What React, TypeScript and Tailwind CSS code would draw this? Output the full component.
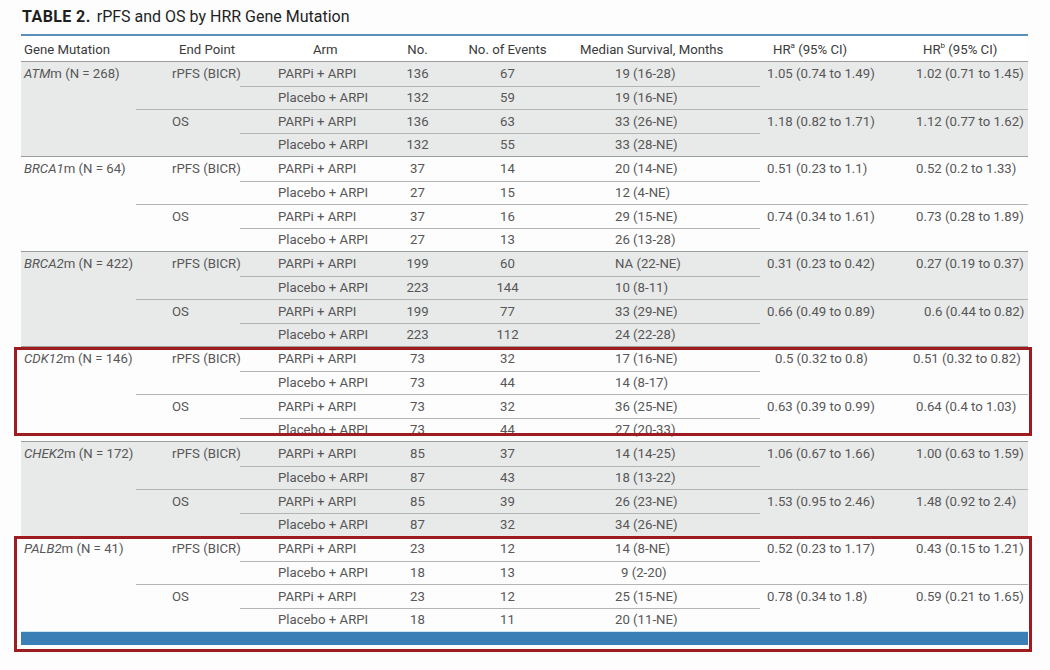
import React from 'react';

type Row = [string, string, string, string];

interface Group {
  gene: string;
  n: number;
  shaded: boolean;
  rows: Row[];
  hr: [string, string][];
  // small nudges where the source table isn't perfectly left aligned
  medPad?: number[];
  hrPad?: [number, number][];
}

const groups: Group[] = [
  {
    gene: 'ATM',
    n: 268,
    shaded: true,
    rows: [
      ['PARPi + ARPI', '136', '67', '19 (16-28)'],
      ['Placebo + ARPI', '132', '59', '19 (16-NE)'],
      ['PARPi + ARPI', '136', '63', '33 (26-NE)'],
      ['Placebo + ARPI', '132', '55', '33 (28-NE)'],
    ],
    hr: [
      ['1.05 (0.74 to 1.49)', '1.02 (0.71 to 1.45)'],
      ['1.18 (0.82 to 1.71)', '1.12 (0.77 to 1.62)'],
    ],
  },
  {
    gene: 'BRCA1',
    n: 64,
    shaded: false,
    rows: [
      ['PARPi + ARPI', '37', '14', '20 (14-NE)'],
      ['Placebo + ARPI', '27', '15', '12 (4-NE)'],
      ['PARPi + ARPI', '37', '16', '29 (15-NE)'],
      ['Placebo + ARPI', '27', '13', '26 (13-28)'],
    ],
    hr: [
      ['0.51 (0.23 to 1.1)', '0.52 (0.2 to 1.33)'],
      ['0.74 (0.34 to 1.61)', '0.73 (0.28 to 1.89)'],
    ],
  },
  {
    gene: 'BRCA2',
    n: 422,
    shaded: true,
    rows: [
      ['PARPi + ARPI', '199', '60', 'NA (22-NE)'],
      ['Placebo + ARPI', '223', '144', '10 (8-11)'],
      ['PARPi + ARPI', '199', '77', '33 (29-NE)'],
      ['Placebo + ARPI', '223', '112', '24 (22-28)'],
    ],
    hr: [
      ['0.31 (0.23 to 0.42)', '0.27 (0.19 to 0.37)'],
      ['0.66 (0.49 to 0.89)', '0.6 (0.44 to 0.82)'],
    ],
    hrPad: [
      [0, 0],
      [0, 8],
    ],
  },
  {
    gene: 'CDK12',
    n: 146,
    shaded: false,
    rows: [
      ['PARPi + ARPI', '73', '32', '17 (16-NE)'],
      ['Placebo + ARPI', '73', '44', '14 (8-17)'],
      ['PARPi + ARPI', '73', '32', '36 (25-NE)'],
      ['Placebo + ARPI', '73', '44', '27 (20-33)'],
    ],
    hr: [
      ['0.5 (0.32 to 0.8)', '0.51 (0.32 to 0.82)'],
      ['0.63 (0.39 to 0.99)', '0.64 (0.4 to 1.03)'],
    ],
    hrPad: [
      [8, -3],
      [0, 0],
    ],
  },
  {
    gene: 'CHEK2',
    n: 172,
    shaded: true,
    rows: [
      ['PARPi + ARPI', '85', '37', '14 (14-25)'],
      ['Placebo + ARPI', '87', '43', '18 (13-22)'],
      ['PARPi + ARPI', '85', '39', '26 (23-NE)'],
      ['Placebo + ARPI', '87', '32', '34 (26-NE)'],
    ],
    hr: [
      ['1.06 (0.67 to 1.66)', '1.00 (0.63 to 1.59)'],
      ['1.53 (0.95 to 2.46)', '1.48 (0.92 to 2.4)'],
    ],
  },
  {
    gene: 'PALB2',
    n: 41,
    shaded: false,
    rows: [
      ['PARPi + ARPI', '23', '12', '14 (8-NE)'],
      ['Placebo + ARPI', '18', '13', '9 (2-20)'],
      ['PARPi + ARPI', '23', '12', '25 (15-NE)'],
      ['Placebo + ARPI', '18', '11', '20 (11-NE)'],
    ],
    hr: [
      ['0.52 (0.23 to 1.17)', '0.43 (0.15 to 1.21)'],
      ['0.78 (0.34 to 1.8)', '0.59 (0.21 to 1.65)'],
    ],
    medPad: [0, 6, 0, 0],
  },
];

const cols = 'grid grid-cols-[115px_104px_145px_65px_115px_195px_145px_123px] whitespace-nowrap';
const line = 'border-t border-[#b4b4b4]';

function GroupRows({ g }: { g: Group }) {
  return (
    <>
      {g.rows.map((r, i) => {
        const pair = i < 2 ? 0 : 1;
        const inner = i === 1 || i === 3; // second arm of an end point
        const midLine = i === 2; // between end points
        const hr = i % 2 === 0 ? g.hr[pair] : null;
        const pads = g.hrPad?.[pair] ?? [0, 0];
        const armLine = inner || midLine ? line : '';
        return (
          <div key={i} className={`${cols} h-[23.5px]`}>
            <div className="flex items-center pl-[3px]">
              {i === 0 && (
                <span>
                  <i>{g.gene}</i>m (N = {g.n})
                </span>
              )}
            </div>
            <div className={`flex items-center pl-[36px] ${midLine ? line : ''}`}>
              {i === 0 ? 'rPFS (BICR)' : i === 2 ? 'OS' : ''}
            </div>
            <div className={`flex items-center pl-[38px] ${armLine}`}>{r[0]}</div>
            <div className={`flex items-center justify-center ${armLine}`}>{r[1]}</div>
            <div className={`flex items-center justify-center ${armLine}`}>{r[2]}</div>
            <div className={`flex items-center pl-[50px] ${armLine}`}>
              <span style={{ marginLeft: g.medPad?.[i] ?? 0 }}>{r[3]}</span>
            </div>
            <div className={`flex items-center pl-[7px] ${midLine ? line : ''}`}>
              {hr && <span style={{ marginLeft: pads[0] }}>{hr[0]}</span>}
            </div>
            <div className={`flex items-center pl-[11px] ${midLine ? line : ''}`}>
              {hr && <span style={{ marginLeft: pads[1] }}>{hr[1]}</span>}
            </div>
          </div>
        );
      })}
    </>
  );
}

export default function App() {
  return (
    <div
      className="w-[1050px] h-[670px] bg-[#fdfdfd] overflow-hidden text-[#575757]"
      style={{ fontFamily: 'Roboto, "Liberation Sans", sans-serif' }}
    >
      <div className="h-[34px] flex items-center pl-[22px] text-[16px] text-[#1f1f1f]">
        <span className="font-bold mr-[6px] tracking-[0.4px]">TABLE 2.</span>
        <span>rPFS and OS by HRR Gene Mutation</span>
      </div>

      <div className="ml-[21px] w-[1007px] text-[13.2px] leading-none">
        <div className="h-[2px] bg-[#5b8fbb]" />
        <div className={`${cols} h-[25px] text-[#3a3a3a] bg-white`}>
          <div className="flex items-center pl-[3px] pt-[2px]">Gene Mutation</div>
          <div className="flex items-center pl-[43px] pt-[2px]">End Point</div>
          <div className="flex items-center pl-[73px] pt-[2px]">Arm</div>
          <div className="flex items-center justify-center pt-[2px]">No.</div>
          <div className="flex items-center justify-center pt-[2px]">No. of Events</div>
          <div className="flex items-center pl-[15px] pt-[2px]">Median Survival, Months</div>
          <div className="flex items-center pl-[13px] pt-[2px]">
            HR<sup className="text-[8px] -top-[4px]">a</sup>&nbsp;(95% CI)
          </div>
          <div className="flex items-center pl-[18px] pt-[2px]">
            HR<sup className="text-[8px] -top-[4px]">b</sup>&nbsp;(95% CI)
          </div>
        </div>

        {groups.map((g) => {
          const body = (
            <div className={`border-t border-[#9c9c9c] ${g.shaded ? 'bg-[#e8e9e9]' : 'bg-[#fdfdfd]'}`}>
              <GroupRows g={g} />
            </div>
          );
          if (g.gene === 'CDK12') {
            return (
              <div key={g.gene} className="relative">
                {body}
                <div className="absolute -left-[7px] -right-[4px] top-[1px] bottom-[5px] border-[3px] border-[#9e1c20]" />
              </div>
            );
          }
          if (g.gene === 'PALB2') {
            return (
              <div key={g.gene} className="relative">
                {body}
                <div className="h-px bg-[#cde6f3]" />
                <div className="h-[13px] bg-[#3a7fb6]" />
                <div className="absolute -left-[7px] -right-[4px] top-0 -bottom-[7px] border-[3px] border-[#9e1c20]" />
              </div>
            );
          }
          return <React.Fragment key={g.gene}>{body}</React.Fragment>;
        })}
      </div>
    </div>
  );
}
